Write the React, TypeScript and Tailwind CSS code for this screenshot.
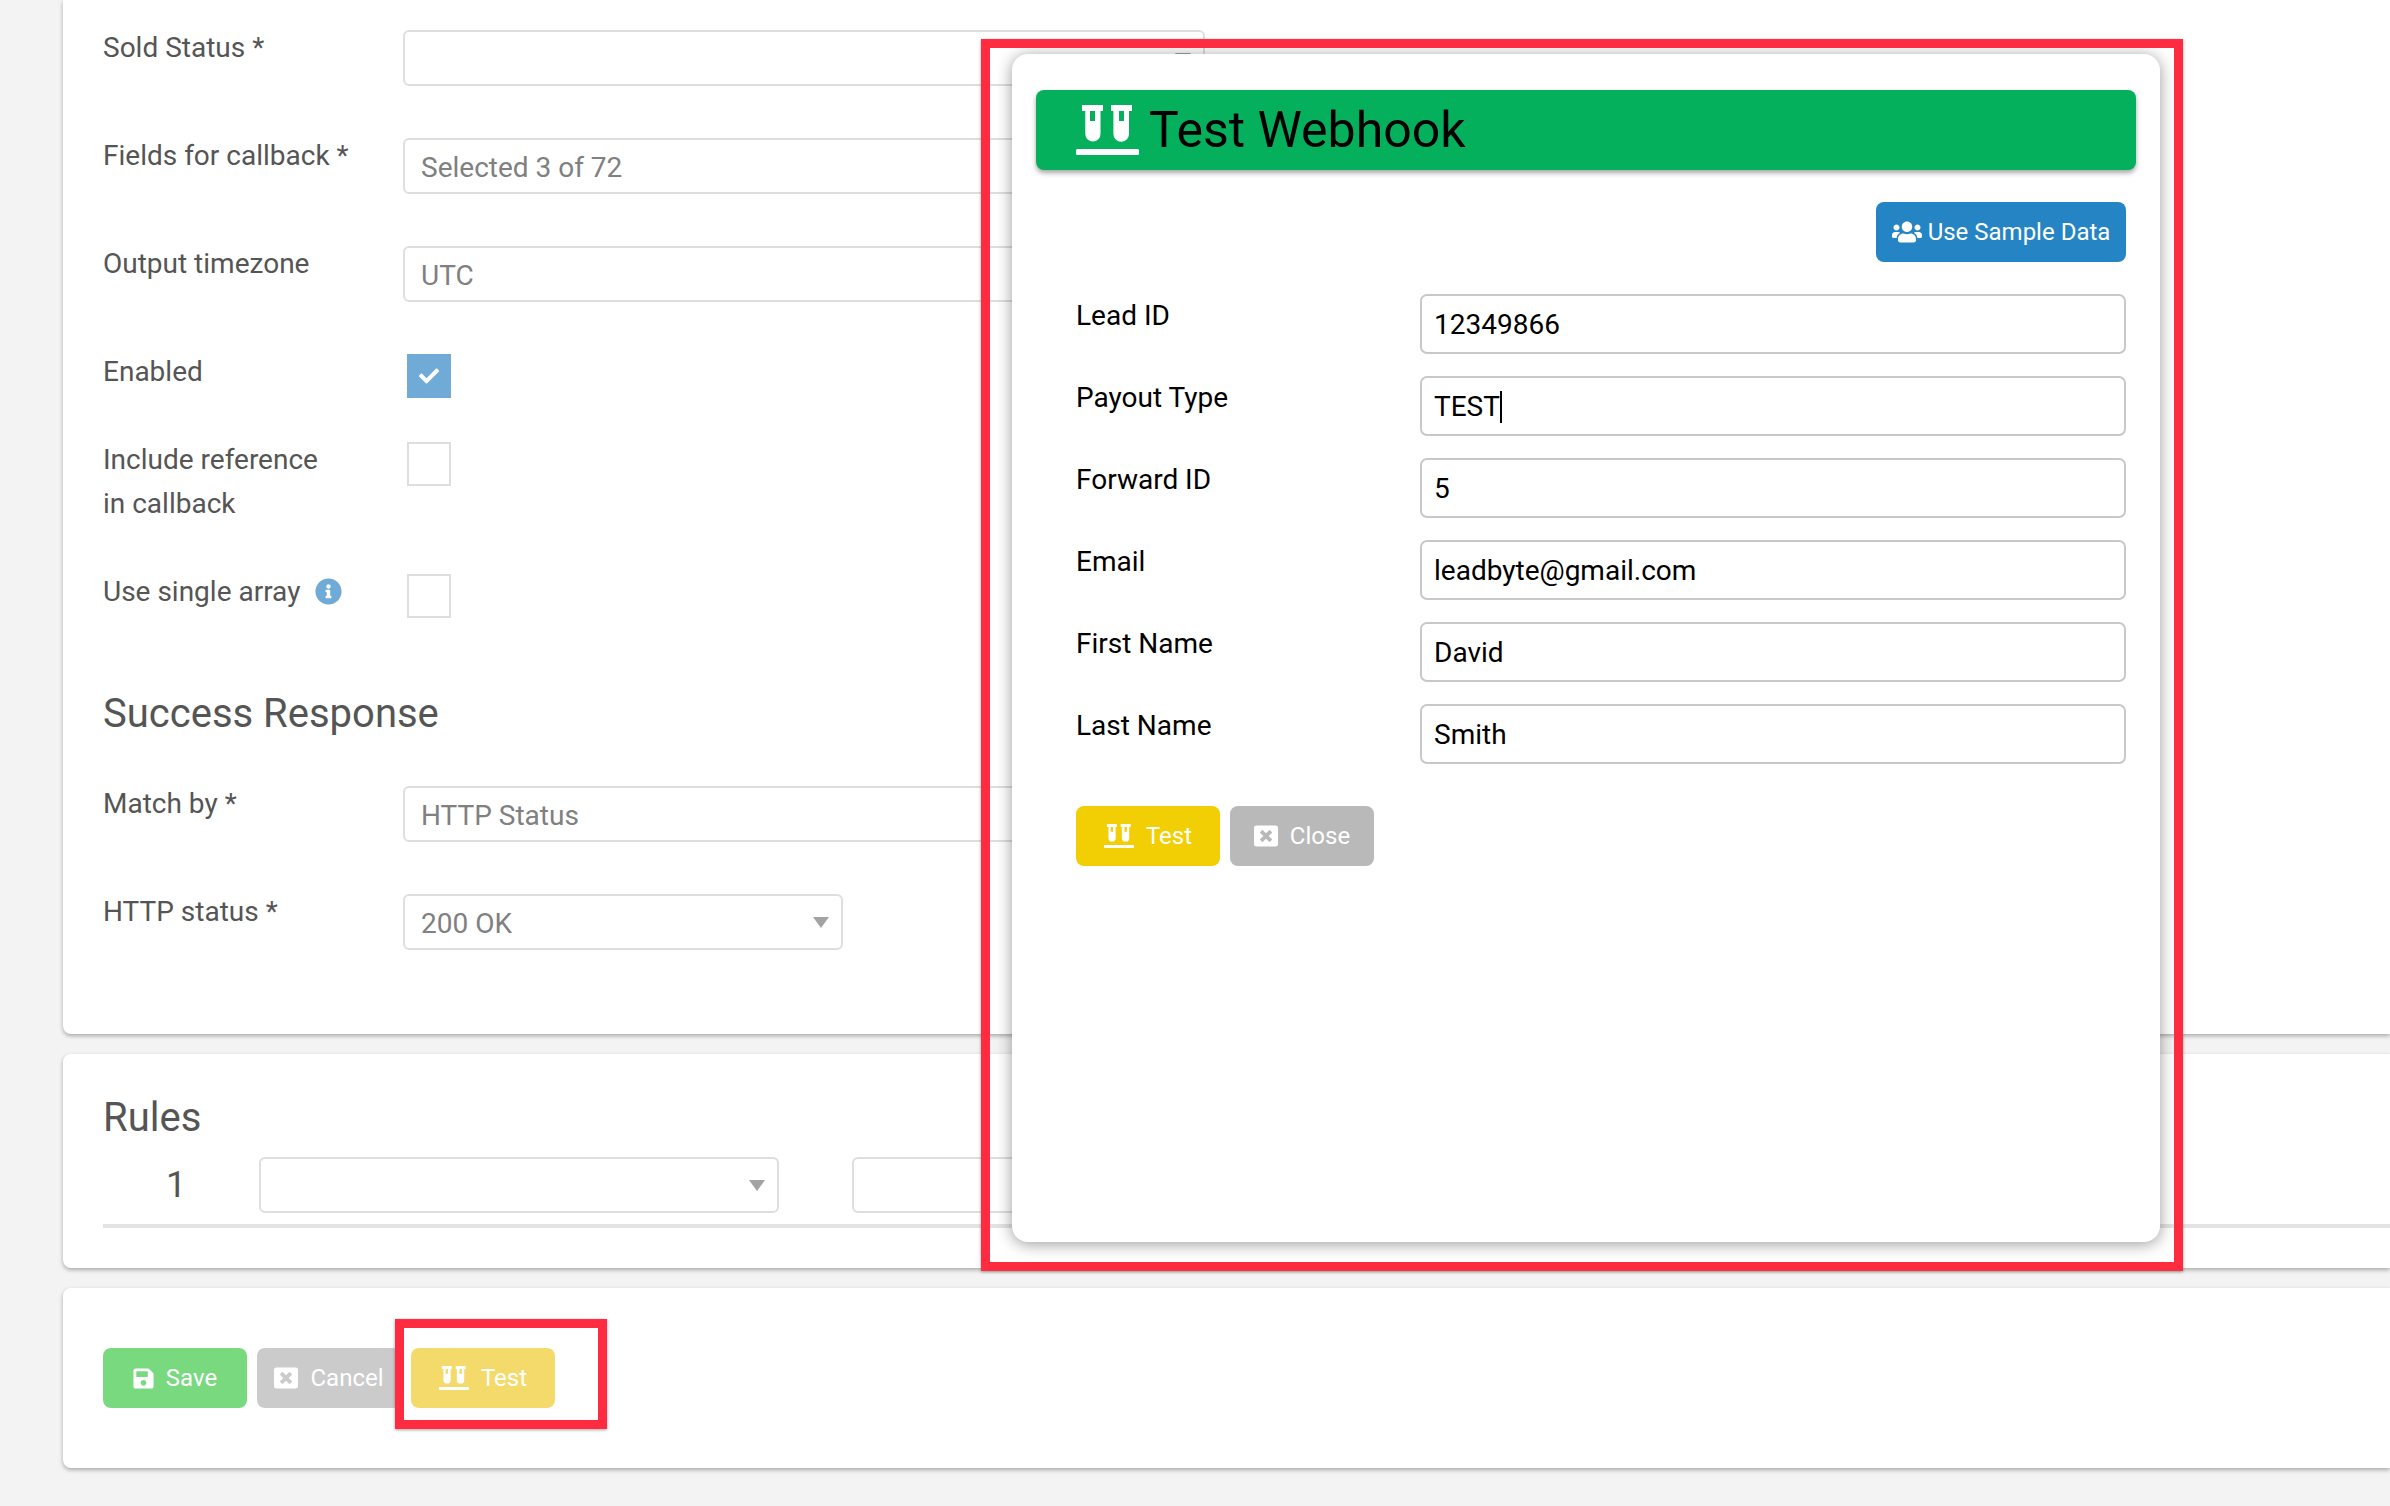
import type { ReactNode } from 'react';
import { FaCheck, FaInfoCircle, FaSave, FaUsers, FaWindowClose } from 'react-icons/fa';

function TubesIcon({ className }: { className: string }) {
  return (
    <svg viewBox="0 0 63 50" className={className} fill="currentColor" aria-hidden="true">
      <path
        fillRule="evenodd"
        d="M6 0h21v6h-2.5v23a7.6 7.6 0 0 1-15.2 0V6H6zM14 6v10h5V6zM35 0h21v6h-3v23a7.8 7.8 0 0 1-15.6 0V6H35zM43 6v10h5V6z"
      />
      <rect x="0" y="44" width="63" height="6" rx="1.5" />
    </svg>
  );
}

function FormRow({ label, children, className = 'mb-[52px]' }: { label: ReactNode; children: ReactNode; className?: string }) {
  return (
    <div className={`flex items-start ${className}`}>
      <div className="w-[300px] shrink-0 -mt-[4px] text-[28px] leading-[44px] text-[#555]">{label}</div>
      {children}
    </div>
  );
}

function SelectBox({ value, width = 'w-[802px]', arrow = false }: { value?: string; width?: string; arrow?: boolean }) {
  return (
    <div className={`${width} h-[56px] shrink-0 flex items-center justify-between pt-[3px] pl-[16px] pr-[12px] bg-white border-2 border-[#dedede] rounded-[6px] text-[28px] text-[#808080]`}>
      <span>{value}</span>
      {arrow && <span className="w-0 h-0 -mt-[3px] border-x-[8px] border-x-transparent border-t-[11px] border-t-[#a3a3a3]" />}
    </div>
  );
}

function Checkbox({ checked = false }: { checked?: boolean }) {
  return checked ? (
    <div className="ml-[4px] w-[44px] h-[44px] flex items-center justify-center bg-[#6fabd6] text-white">
      <FaCheck className="w-[20px] h-[20px]" />
    </div>
  ) : (
    <div className="ml-[4px] w-[44px] h-[44px] bg-white border-2 border-[#dedede]" />
  );
}

function ModalField({ label, value, caret = false }: { label: string; value: string; caret?: boolean }) {
  return (
    <div className="flex items-start">
      <div className="w-[344px] shrink-0 pt-[1px] text-[28px] leading-[42px] text-black">{label}</div>
      <div className="w-[706px] h-[60px] flex items-center pt-[2px] pl-[12px] bg-white border-2 border-[#c8c8c8] rounded-[7px] text-[28px] text-black">
        {value}
        {caret && <span className="w-[2px] h-[32px] bg-black" />}
      </div>
    </div>
  );
}

const modalFields = [
  { label: 'Lead ID', value: '12349866' },
  { label: 'Payout Type', value: 'TEST', caret: true },
  { label: 'Forward ID', value: '5' },
  { label: 'Email', value: 'leadbyte@gmail.com' },
  { label: 'First Name', value: 'David' },
  { label: 'Last Name', value: 'Smith' },
];

export default function App() {
  return (
    <div className="relative h-[1506px] overflow-hidden bg-[#f3f3f3] font-['Roboto',sans-serif]">
      {/* Main form */}
      <div className="ml-[63px] pt-[30px] pb-[84px] pl-[40px] bg-white rounded-bl-[8px] shadow-[0_2px_4px_rgba(0,0,0,0.3)]">
        <FormRow label="Sold Status *">
          <SelectBox arrow />
        </FormRow>
        <FormRow label="Fields for callback *">
          <SelectBox value="Selected 3 of 72" />
        </FormRow>
        <FormRow label="Output timezone">
          <SelectBox value="UTC" />
        </FormRow>
        <FormRow label="Enabled" className="mb-[44px]">
          <Checkbox checked />
        </FormRow>
        <FormRow label={<>Include reference<br />in callback</>} className="mb-[48px]">
          <Checkbox />
        </FormRow>
        <FormRow
          label={
            <span className="flex items-center gap-[15px]">
              Use single array <FaInfoCircle className="w-[27px] h-[27px] -mt-[2px] text-[#6fabd6]" />
            </span>
          }
          className="mb-[72px]"
        >
          <Checkbox />
        </FormRow>

        <h2 className="text-[40px] leading-[48px] text-[#555] mb-[48px]">Success Response</h2>
        <FormRow label="Match by *">
          <SelectBox value="HTTP Status" />
        </FormRow>
        <FormRow label="HTTP status *" className="">
          <SelectBox value="200 OK" width="w-[440px]" arrow />
        </FormRow>
      </div>

      {/* Rules */}
      <div className="ml-[63px] mt-[20px] pt-[40px] pb-[40px] pl-[40px] bg-white rounded-l-[8px] shadow-[0_2px_4px_rgba(0,0,0,0.3)]">
        <h2 className="text-[40px] leading-[48px] text-[#555]">Rules</h2>
        <div className="flex items-center mt-[15px]">
          <div className="w-[156px] pr-[10px] text-center text-[36px] text-[#555]">1</div>
          <SelectBox width="w-[520px]" arrow />
          <div className="w-[73px]" />
          <SelectBox width="w-[520px]" />
        </div>
        <div className="h-[4px] mt-[11px] bg-[#e3e3e3]" />
      </div>

      {/* Actions */}
      <div className="ml-[63px] mt-[20px] py-[60px] pl-[40px] flex gap-[10px] bg-white rounded-l-[8px] shadow-[0_2px_4px_rgba(0,0,0,0.3)]">
        <button className="w-[144px] h-[60px] flex items-center justify-center gap-[11px] pr-[1px] rounded-[8px] bg-[#79d97f] text-[24px] text-white">
          <FaSave className="w-[23px] h-[23px]" /> Save
        </button>
        <button className="w-[144px] h-[60px] flex items-center justify-center gap-[12px] rounded-[8px] bg-[#cbcbcb] text-[24px] text-white">
          <FaWindowClose className="w-[24px] h-[24px]" /> Cancel
        </button>
        <button className="w-[144px] h-[60px] flex items-center justify-center gap-[12px] rounded-[8px] bg-[#f3da6b] text-[24px] text-white">
          <TubesIcon className="w-[30px] h-[24px]" /> Test
        </button>
      </div>

      {/* Test Webhook modal */}
      <div className="absolute left-[1012px] top-[54px] w-[1148px] h-[1188px] pt-[36px] pl-[24px] pr-[24px] bg-white rounded-[16px] shadow-[0_2px_16px_rgba(0,0,0,0.4)]">
        <div className="h-[80px] flex items-center pl-[40px] gap-[10px] bg-[#04b05c] rounded-[8px] shadow-[0_3px_5px_rgba(0,0,0,0.35)]">
          <TubesIcon className="w-[63px] h-[50px] text-white" />
          <h1 className="text-[50px] leading-none text-black">Test Webhook</h1>
        </div>
        <div className="flex justify-end pr-[10px] mt-[32px]">
          <button className="w-[250px] h-[60px] flex items-center justify-center gap-[6px] rounded-[8px] bg-[#2585c4] text-[24px] text-white">
            <FaUsers className="w-[30px] h-[30px]" /> Use Sample Data
          </button>
        </div>
        <div className="flex flex-col gap-[22px] mt-[32px] ml-[40px]">
          {modalFields.map((field) => (
            <ModalField key={field.label} {...field} />
          ))}
        </div>
        <div className="flex gap-[10px] mt-[42px] ml-[40px]">
          <button className="w-[144px] h-[60px] flex items-center justify-center gap-[12px] rounded-[8px] bg-[#f1cf04] text-[24px] text-white">
            <TubesIcon className="w-[30px] h-[24px]" /> Test
          </button>
          <button className="w-[144px] h-[60px] flex items-center justify-center gap-[12px] rounded-[8px] bg-[#b9b9b9] text-[24px] text-white">
            <FaWindowClose className="w-[24px] h-[24px]" /> Close
          </button>
        </div>
      </div>

      {/* Red annotation frames */}
      <div className="absolute left-[981px] top-[39px] w-[1202px] h-[1232px] border-[9px] border-[#ff2b40] shadow-[0_1px_3px_rgba(0,0,0,0.35)]" />
      <div className="absolute left-[395px] top-[1319px] w-[212px] h-[110px] border-[9px] border-[#ff2b40] shadow-[0_1px_3px_rgba(0,0,0,0.35)]" />
    </div>
  );
}
